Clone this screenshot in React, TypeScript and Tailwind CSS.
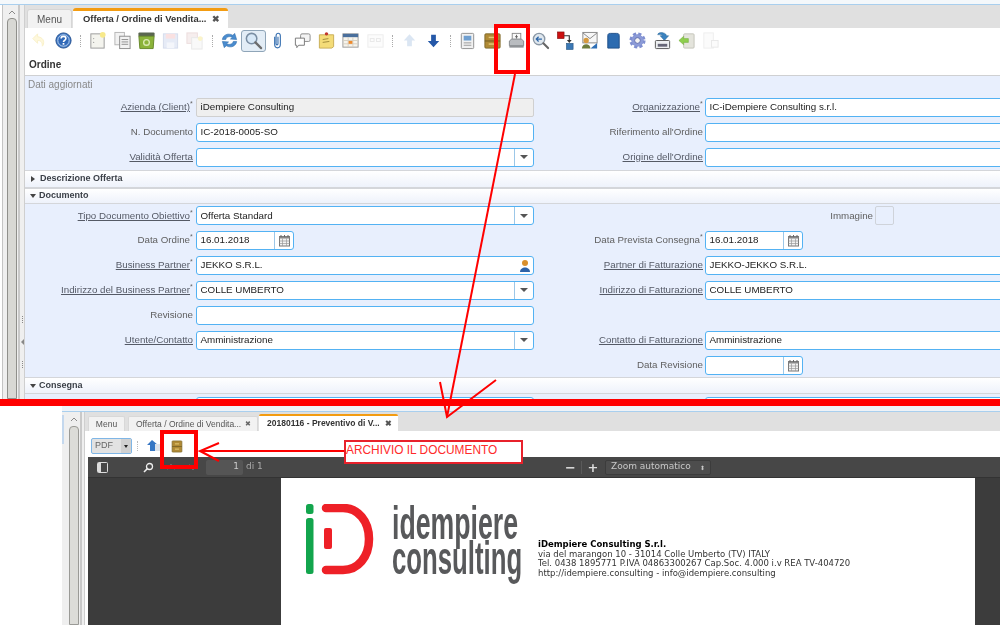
import type { ReactNode } from "react";

const Svg = ({ children, size = 19 }: { children: ReactNode; size?: number }) => (
  <svg width={size} height={size} viewBox="0 0 20 20">
    {children}
  </svg>
);

const toolbar: (string | null)[] = [
  "undo", "help", null,
  "new", "copy", "delete", "save", "savenew", null,
  "refresh", "find", "attach", "chat", "note", "calendar", "off", null,
  "up", "down", null,
  "report", "archive", "print", "zoom", "flow", "request", "product", "gear", "export", "import", "off2",
];

function ToolIcon({ name }: { name: string }) {
  switch (name) {
    case "undo":
      return (
        <Svg>
          <path d="M8 3 3 8l5 5V10c3 0 5 1 5 6 2-2 3-9-5-10z" fill="#fef8dc" stroke="#f9f0c8" strokeWidth="1" />
        </Svg>
      );
    case "help":
      return (
        <Svg>
          <circle cx="10" cy="10" r="8" fill="#3f78c4" stroke="#24508f" strokeWidth="1" />
          <circle cx="10" cy="10" r="6" fill="#2f68b8" stroke="#bcd3ef" strokeWidth="1" />
          <path d="M7.5 8c0-3.2 5-3.2 5 0 0 2-2.5 1.7-2.5 3.6" fill="none" stroke="#fff" strokeWidth="1.7" />
          <rect x="9.1" y="12.6" width="1.8" height="1.8" fill="#fff" />
        </Svg>
      );
    case "new":
      return (
        <Svg>
          <rect x="3" y="3" width="14" height="15" fill="#f4f4ee" stroke="#9a9a9a" />
          <circle cx="15.5" cy="4" r="3" fill="#f7e98a" />
          <circle cx="6" cy="8" r=".6" fill="#999" />
          <circle cx="6" cy="12" r=".6" fill="#999" />
        </Svg>
      );
    case "copy":
      return (
        <Svg>
          <rect x="2" y="1.5" width="10" height="13" fill="#f2f2f2" stroke="#b5b5b5" />
          <rect x="7" y="5.5" width="11" height="13" fill="#f2f2f2" stroke="#8d8d8d" />
          <path d="M9 9h7M9 11.5h7M9 14h7" stroke="#8d8d8d" />
        </Svg>
      );
    case "delete":
      return (
        <Svg>
          <rect x="1.500" y="1.500" width="17" height="4.500" rx="1" fill="#5a6650" />
          <path d="M2 5.500h16l-1 13H3z" fill="#8bb339" stroke="#66882a" />
          <circle cx="10" cy="12" r="3" fill="none" stroke="#dcebb4" strokeWidth="1.400" />
        </Svg>
      );
    case "save":
      return (
        <Svg>
          <rect x="2.5" y="3" width="15" height="15" fill="#e6ebf6" stroke="#d5dcec" />
          <rect x="5" y="3" width="10" height="5" fill="#fae1e1" />
          <rect x="6" y="12" width="8" height="6" fill="#f4f6fb" />
        </Svg>
      );
    case "savenew":
      return (
        <Svg>
          <rect x="2" y="2" width="11" height="11" fill="#f6eeee" stroke="#ecdcdc" />
          <rect x="7" y="7" width="11" height="12" fill="#f9f9f9" stroke="#e8e8e8" />
          <circle cx="16" cy="8" r="2.5" fill="#fbf4c9" />
        </Svg>
      );
    case "refresh":
      return (
        <Svg>
          <path d="M2.5 9C3 4.5 8 1.5 13.5 4.5L15.5 2.5 17.5 9 11 8.5l2-2C9.5 5 6.5 6.5 6 9z" fill="#4a8ccf" stroke="#2d6aa8" strokeWidth=".6" />
          <path d="M17.5 11c-.5 4.5-5.5 7.5-11 4.5L4.500 17.500 2.500 11l6.500.5-2 2c3.500 1.500 6.500 0 7-2.500z" fill="#4a8ccf" stroke="#2d6aa8" strokeWidth=".6" />
        </Svg>
      );
    case "find":
      return (
        <Svg>
          <circle cx="8" cy="8" r="5.500" fill="#d7e8f7" stroke="#7a8ea3" strokeWidth="1.600" />
          <path d="M12 12l6 6" stroke="#6d6d6d" strokeWidth="2.400" strokeLinecap="round" />
        </Svg>
      );
    case "attach":
      return (
        <Svg>
          <path d="M7 6v8c0 5 6 5 6 0V5c0-3.500-4.500-3.500-4.500 0v8.500c0 1.500 2 1.500 2 0V6" fill="none" stroke="#3a72b2" strokeWidth="1.200" />
        </Svg>
      );
    case "chat":
      return (
        <Svg>
          <rect x="8" y="3" width="10" height="8" rx="1.500" fill="#f4f4f4" stroke="#8a8a8a" />
          <path d="M2.500 7.500h9.500v7.500H6l-2 2.500V15H2.500z" fill="#fff" stroke="#777" />
        </Svg>
      );
    case "note":
      return (
        <Svg>
          <path d="M2.500 4h15v12.500l-2 1.500h-13z" fill="#f4dc78" stroke="#c8ad55" />
          <circle cx="10" cy="3" r="1.800" fill="#c2352b" />
          <path d="M6 9l6-1M6 12l7-1" stroke="#a08a3a" />
        </Svg>
      );
    case "calendar":
      return (
        <Svg>
          <rect x="2" y="3" width="16" height="14" fill="#f7f4ec" stroke="#9a9a9a" />
          <rect x="2" y="3" width="16" height="3.500" fill="#4a6f9c" />
          <path d="M2 10h16M2 13.500h16M7.500 6.500V17M12.500 6.500V17" stroke="#d6d0c2" />
          <rect x="8" y="10.500" width="4" height="3" fill="#ee8a2c" />
        </Svg>
      );
    case "off":
      return (
        <Svg>
          <rect x="2" y="4" width="16" height="13" fill="#fcfcfc" stroke="#ececec" />
          <rect x="4.500" y="8" width="4" height="3" fill="none" stroke="#e8e8e8" />
          <rect x="11" y="8" width="4" height="3" fill="none" stroke="#e8e8e8" />
        </Svg>
      );
    case "up":
      return (
        <Svg>
          <path d="M10 3.500 4 10h3.500v6h5v-6H16z" fill="#dbe6f3" />
        </Svg>
      );
    case "down":
      return (
        <Svg>
          <path d="M10 17l6-6.500h-3.500v-6.500h-5v6.500H4z" fill="#2558a8" />
        </Svg>
      );
    case "report":
      return (
        <Svg>
          <rect x="3.500" y="2.500" width="13" height="16" rx="1" fill="#f1f1f1" stroke="#8f8f8f" />
          <rect x="6" y="5" width="8" height="5" fill="#6f9fd0" />
          <path d="M6 12.500h8M6 15h8" stroke="#999" />
        </Svg>
      );
    case "archive":
      return (
        <Svg>
          <rect x="2" y="3" width="16" height="15" rx="1" fill="#b08a35" stroke="#7f6a2c" />
          <path d="M2 10.500h16" stroke="#6e5a22" />
          <rect x="6" y="6" width="8" height="1.500" fill="#e3c877" />
          <rect x="6" y="13" width="8" height="1.500" fill="#e3c877" />
        </Svg>
      );
    case "print":
      return (
        <Svg>
          <rect x="5.500" y="2.500" width="9" height="8" fill="#fafafa" stroke="#8c8c8c" />
          <path d="M10 4v4M8.500 6h3" stroke="#666" />
          <path d="M2.500 10.500 5 8.500h10l2.500 2v5h-15z" fill="#b9bcc0" stroke="#85888c" />
          <rect x="2.500" y="15" width="15" height="2.500" fill="#8f9296" />
        </Svg>
      );
    case "zoom":
      return (
        <Svg>
          <circle cx="8.500" cy="8.500" r="6" fill="#dfe7ee" stroke="#8a97a5" strokeWidth="1.400" />
          <path d="M11.500 8.500H5.500M8 6 5.500 8.500 8 11" fill="none" stroke="#2d66a8" strokeWidth="1.300" />
          <path d="M13 13l5 5" stroke="#666" strokeWidth="2.200" strokeLinecap="round" />
        </Svg>
      );
    case "flow":
      return (
        <Svg>
          <rect x="1.500" y="1" width="7" height="7" fill="#cc1111" stroke="#7c0b0b" strokeWidth=".6" />
          <path d="M8.500 5H14v5" fill="none" stroke="#333" strokeWidth="1.200" />
          <path d="M11.500 9.500h5L14 12.500z" fill="#333" />
          <rect x="11" y="13" width="7" height="6.500" fill="#3b78b5" stroke="#24527f" strokeWidth=".6" />
        </Svg>
      );
    case "request":
      return (
        <Svg>
          <rect x="3" y="1.500" width="15" height="11" fill="#f7f7f7" stroke="#888" />
          <path d="M3 2l7.500 6L18 2" fill="none" stroke="#888" />
          <circle cx="6.500" cy="10" r="2.800" fill="#d69a3e" />
          <path d="M2 18.500c0-6 9-6 9 0z" fill="#6e7d3d" />
          <path d="M11 18.500l7-6v6z" fill="#2f6fb5" />
        </Svg>
      );
    case "product":
      return (
        <Svg>
          <path d="M4 5c0-2 1-2.500 3-2.500h6c2 0 3 .5 3 2.500v13H4z" fill="#2c6bb0" stroke="#1f4f88" />
        </Svg>
      );
    case "gear":
      return (
        <Svg>
          <circle cx="10" cy="10" r="6.500" fill="#7f8fd0" stroke="#7f8fd0" strokeWidth="4" strokeDasharray="3 2.100" />
          <circle cx="10" cy="10" r="6" fill="#8c9bd8" />
          <circle cx="10" cy="10" r="3" fill="#f4f4f4" stroke="#5e6cab" />
        </Svg>
      );
    case "export":
      return (
        <Svg>
          <path d="M5 4c0-2 3-3 6-2 2 .5 3 1.500 3 3h2.500L12 10 7.500 5H10C9.500 4 7 3.500 5 4z" fill="#3a83c0" stroke="#24608f" strokeWidth=".5" />
          <rect x="2.500" y="10" width="15" height="8.500" rx="1" fill="#eef0f2" stroke="#555" />
          <rect x="5" y="13.500" width="10" height="3" fill="#667" />
        </Svg>
      );
    case "import":
      return (
        <Svg>
          <rect x="7" y="3" width="11" height="15" rx="1" fill="#e4e4dc" stroke="#c5c5bb" />
          <path d="M2 10l5-4.500v2.500h5v4H7v2.500z" fill="#8ecf4d" stroke="#6ea638" strokeWidth=".5" />
        </Svg>
      );
    default:
      return (
        <Svg>
          <rect x="3" y="2" width="10" height="16" fill="#fbfbfb" stroke="#eeeeee" />
          <rect x="11" y="10" width="7" height="7" fill="#fbfbfb" stroke="#e8e8e8" />
        </Svg>
      );
  }
}

function CalIcon() {
  return (
    <svg width="13" height="13" viewBox="0 0 13 13">
      <rect x="1.500" y="2.500" width="10" height="9.500" fill="#f2f2f2" stroke="#777" />
      <rect x="1.500" y="2.500" width="10" height="2" fill="#888" />
      <path d="M3 1v2M6.500 1v2M10 1v2" stroke="#666" />
      <path d="M1.500 7h10M1.500 9.500h10M4.500 4.500V12M8.500 4.500V12" stroke="#999" strokeWidth=".7" />
    </svg>
  );
}

function Label({ text, link, req }: { text: string; link?: boolean; req?: boolean }) {
  return (
    <span className={link ? "whitespace-nowrap text-[9.750px] text-[#555a66] underline" : "whitespace-nowrap text-[9.750px] text-[#5f5f5f]"}>
      {text}
      {req && <span className="relative -top-[4px] inline-block w-[3px] text-[7px] text-[#666] no-underline">*</span>}
    </span>
  );
}

function Field({ value, kind, grey }: { value?: string; kind?: "select" | "date" | "bp"; grey?: boolean }) {
  return (
    <div
      className={
        grey
          ? "flex h-[19px] w-full items-center rounded-[2px] border border-[#d0d0d0] bg-[#efefef]"
          : kind === "date"
            ? "flex h-[19px] w-[98px] items-center rounded-[3px] border border-[#53b2f3] bg-white"
            : "flex h-[19px] w-full items-center rounded-[3px] border border-[#53b2f3] bg-white"
      }
    >
      <span className="flex-1 truncate pl-[3.500px] text-[9.800px] text-[#222]">{value}</span>
      {kind === "select" && (
        <span className="flex h-full w-[19px] items-center justify-center border-l border-[#9cc7e8]">
          <span className="h-0 w-0 border-x-[4px] border-t-[4px] border-x-transparent border-t-[#555]" />
        </span>
      )}
      {kind === "date" && (
        <span className="flex h-full w-[19px] items-center justify-center border-l border-[#9cc7e8]">
          <CalIcon />
        </span>
      )}
      {kind === "bp" && (
        <svg className="mr-[1px]" width="14" height="14" viewBox="0 0 14 14">
          <circle cx="7" cy="4" r="3" fill="#d98f2b" />
          <path d="M2 13c0-6 10-6 10 0z" fill="#2d62a8" />
        </svg>
      )}
    </div>
  );
}

type Cell = { label: string; link?: boolean; req?: boolean; value?: string; kind?: "select" | "date" | "bp"; grey?: boolean };

function Row({ left, right }: { left?: Cell; right?: Cell }) {
  return (
    <div className="flex h-[24.850px] items-center">
      <div className="flex w-[168px] shrink-0 justify-end">{left && <Label text={left.label} link={left.link} req={left.req} />}</div>
      <div className="ml-[3px] w-[338px] shrink-0">{left && <Field value={left.value} kind={left.kind} grey={left.grey} />}</div>
      <div className="flex w-[169px] shrink-0 justify-end">{right && <Label text={right.label} link={right.link} req={right.req} />}</div>
      <div className="ml-[2px] w-[320px] shrink-0">{right && <Field value={right.value} kind={right.kind} />}</div>
    </div>
  );
}

function Section({ title, open, h }: { title: string; open?: boolean; h: string }) {
  return (
    <div className={`flex ${h} items-center gap-[3px] border-y border-[#d4d6da] bg-gradient-to-b from-white to-[#eef2fb] pl-[5px]`}>
      {open ? (
        <span className="h-0 w-0 border-x-[3.500px] border-t-[4px] border-x-transparent border-t-[#444]" />
      ) : (
        <span className="ml-[1px] mr-[2px] h-0 w-0 border-y-[3.500px] border-l-[4px] border-y-transparent border-l-[#444]" />
      )}
      <span className="text-[9px] font-bold text-[#3a3f47]">{title}</span>
    </div>
  );
}

function SideRail({ top }: { top: boolean }) {
  return (
    <div className="relative h-full w-full bg-[#efefef]">
      {top && <div className="absolute inset-y-0 left-0 w-[3px] border-r border-[#c4c4c4] bg-white" />}
      <div className={top ? "absolute bottom-0 left-[7px] top-[13px] w-[10px] rounded-t-[4px] border border-[#8f8f8b] bg-[#d8d8d4]" : "absolute bottom-0 left-[7px] top-[14px] w-[10px] rounded-t-[4px] border border-[#9a9a96] bg-[#dcdcd8]"} />
      <div className="absolute inset-y-0 left-[18px] w-[2px] bg-[#c9c9c9]" />
      <svg className="absolute left-[8px] top-[4px]" width="8" height="6" viewBox="0 0 8 6">
        <path d="M1 5l3-3 3 3" fill="none" stroke="#888" />
      </svg>
      {top && (
        <div className="absolute left-[20px] top-[311px] flex h-[52px] w-[4px] flex-col items-center justify-between">
          <span className="h-[7px] border-l border-dotted border-[#888]" />
          <span className="h-0 w-0 border-y-[3px] border-r-[3px] border-y-transparent border-r-[#888]" />
          <span className="h-[7px] border-l border-dotted border-[#888]" />
        </div>
      )}
    </div>
  );
}

function PdfLogo() {
  return (
    <svg className="shrink-0" width="72" height="74" viewBox="0 0 72 74">
      <rect x="1" y="0" width="7.500" height="10" rx="2.500" fill="#12a54d" />
      <rect x="1" y="14" width="7.500" height="56" rx="2.500" fill="#12a54d" />
      <path d="M21 4h17c15 0 26 13 26 31s-11 31-26 31H21" fill="none" stroke="#ee2027" strokeWidth="8.500" strokeLinecap="round" />
      <rect x="19" y="24" width="8" height="21" rx="2" fill="#ee2027" />
    </svg>
  );
}

export default function App() {
  return (
    <div className="relative h-[625px] w-[1000px] overflow-hidden bg-white font-['Liberation_Sans',Arial,sans-serif]">
      {/* first screenshot */}
      <div className="flex h-[399px] flex-col overflow-hidden blur-[0.3px]">
        <div className="h-[5px] shrink-0 border-b border-[#a9cfee] bg-[#f4f8fb]" />
        <div className="flex min-h-0 flex-1">
          <div className="w-[25px] shrink-0 border-r border-[#cfcfcf]">
            <SideRail top />
          </div>
          <div className="flex min-w-0 flex-1 flex-col bg-white">
            <div className="flex h-[23px] shrink-0 items-end gap-[1px] bg-[#e0e0e0] pl-[2px]">
              <div className="flex h-[19px] w-[45px] items-center justify-center rounded-t-[3px] border border-b-0 border-[#d6d6d6] bg-[#f2f2f2] text-[10px] text-[#555]">Menu</div>
              <div className="flex h-[20px] w-[155px] items-center justify-between rounded-t-[3px] border-t-[3px] border-[#f39c12] bg-white pl-[10px] pr-[8px] text-[9.400px] font-bold text-[#333]">
                <span className="whitespace-nowrap">Offerta / Ordine di Vendita...</span>
                <span className="text-[9px] text-[#555]">✖</span>
              </div>
            </div>
            <div className="flex h-[24px] shrink-0 items-center pl-[2px] pt-[1px]">
              {toolbar.map((t, i) =>
                t === null ? (
                  <span key={i} className="flex w-[10px] justify-center">
                    <span className="h-[12px] border-l border-dotted border-[#aaa]" />
                  </span>
                ) : (
                  <span
                    key={i}
                    className={
                      t === "find"
                        ? "flex h-[22px] w-[24.300px] items-center justify-center rounded-[3px] border border-[#8fa5b8] bg-[#e3edf6]"
                        : "flex h-[22px] w-[24.300px] items-center justify-center"
                    }
                  >
                    <ToolIcon name={t} />
                  </span>
                ),
              )}
            </div>
            <div className="flex h-[24px] shrink-0 items-center border-b border-[#cfd0d2] pl-[4px] pt-[1px] text-[10px] font-bold text-[#333]">Ordine</div>
            <div className="min-h-0 flex-1 bg-[#e8effd]">
              <div className="flex h-[19px] items-center pb-[3px] pl-[3px] text-[10px] text-[#888]">Dati aggiornati</div>
              <Row
                left={{ label: "Azienda (Client)", link: true, req: true, value: "iDempiere Consulting", grey: true }}
                right={{ label: "Organizzazione", link: true, req: true, value: "IC-iDempiere Consulting s.r.l." }}
              />
              <Row left={{ label: "N. Documento", value: "IC-2018-0005-SO" }} right={{ label: "Riferimento all'Ordine" }} />
              <Row left={{ label: "Validità Offerta", link: true, kind: "select" }} right={{ label: "Origine dell'Ordine", link: true }} />
              <Section title="Descrizione Offerta" h="h-[18px]" />
              <Section title="Documento" open h="h-[16px]" />
              <div className="flex h-[24.850px] items-center">
                <div className="flex w-[168px] shrink-0 justify-end">
                  <Label text="Tipo Documento Obiettivo" link req />
                </div>
                <div className="ml-[3px] w-[338px] shrink-0">
                  <Field value="Offerta Standard" kind="select" />
                </div>
                <div className="flex w-[339px] shrink-0 justify-end">
                  <Label text="Immagine" />
                </div>
                <div className="ml-[2px] h-[19px] w-[19px] shrink-0 rounded-[2px] border border-[#cfd3da] bg-[#e8effd]" />
              </div>
              <Row
                left={{ label: "Data Ordine", req: true, value: "16.01.2018", kind: "date" }}
                right={{ label: "Data Prevista Consegna", req: true, value: "16.01.2018", kind: "date" }}
              />
              <Row
                left={{ label: "Business Partner", link: true, req: true, value: "JEKKO S.R.L.", kind: "bp" }}
                right={{ label: "Partner di Fatturazione", link: true, value: "JEKKO-JEKKO S.R.L." }}
              />
              <Row
                left={{ label: "Indirizzo del Business Partner", link: true, req: true, value: "COLLE UMBERTO", kind: "select" }}
                right={{ label: "Indirizzo di Fatturazione", link: true, value: "COLLE UMBERTO" }}
              />
              <Row left={{ label: "Revisione" }} />
              <Row
                left={{ label: "Utente/Contatto", link: true, value: "Amministrazione", kind: "select" }}
                right={{ label: "Contatto di Fatturazione", link: true, value: "Amministrazione" }}
              />
              <Row right={{ label: "Data Revisione", kind: "date" }} />
              <Section title="Consegna" open h="h-[17px]" />
              <div className="ml-[171px] mt-[3px] flex gap-[171px]">
                <div className="h-[19px] w-[338px] shrink-0 rounded-[3px] border border-[#53b2f3] bg-white" />
                <div className="h-[19px] w-[320px] shrink-0 rounded-[3px] border border-[#53b2f3] bg-white" />
              </div>
            </div>
          </div>
        </div>
      </div>

      <div className="h-[7px] bg-[#ff0000]" />

      {/* second screenshot */}
      <div className="flex h-[219px] blur-[0.3px]">
        <div className="w-[62px] shrink-0 bg-white" />
        <div className="flex min-w-0 flex-1 flex-col">
          <div className="h-[6px] shrink-0 border-b border-[#a9cfee] bg-[#eef3f8]" />
          <div className="flex min-h-0 flex-1">
            <div className="relative w-[23px] shrink-0 border-r border-[#cfcfcf]">
              <SideRail top={false} />
              <div className="absolute left-0 top-[3px] h-[29px] w-[2px] bg-[#c4d8ee]" />
            </div>
            <div className="flex min-w-0 flex-1 flex-col">
              <div className="flex h-[19px] shrink-0 items-end gap-[3px] bg-[#e0e0e0] pl-[3px]">
                <div className="flex h-[15px] w-[37px] items-center justify-center rounded-t-[2px] border border-b-0 border-[#d8d8d8] bg-[#f2f2f2] text-[8.500px] text-[#555]">Menu</div>
                <div className="-mr-[2px] flex h-[15px] w-[130px] items-center justify-between rounded-t-[2px] border border-b-0 border-[#d8d8d8] bg-[#f2f2f2] pl-[7px] pr-[6px] text-[8.500px] text-[#555]">
                  <span>Offerta / Ordine di Vendita...</span>
                  <span className="text-[7px] text-[#666]">✖</span>
                </div>
                <div className="flex h-[17px] w-[139px] items-center justify-between rounded-t-[2px] border-t-2 border-[#f39c12] bg-white pl-[8px] pr-[6px] text-[8.500px] font-bold text-[#333]">
                  <span>20180116 - Preventivo di V...</span>
                  <span className="text-[8px] text-[#555]">✖</span>
                </div>
              </div>
              <div className="flex h-[26px] shrink-0 items-center bg-white pl-[6px] pt-[4px]">
                <div className="flex h-[16px] w-[41px] items-center justify-between rounded-[2px] border border-[#7fb6e6] bg-[#e2e2e2] pl-[3px] text-[9px] text-[#666]">
                  PDF
                  <span className="flex h-full w-[10px] items-center justify-center bg-[#d0d0d0]">
                    <span className="h-0 w-0 border-x-[2.500px] border-t-[3px] border-x-transparent border-t-[#222]" />
                  </span>
                </div>
                <span className="ml-[5px] h-[10px] border-l border-dotted border-[#bbb]" />
                <span className="ml-[8px] flex w-[16px]">
                  <svg width="16" height="14" viewBox="0 0 16 14">
                    <path d="M6 1 1 6h3v6h5V6h3z" fill="#3576c4" />
                    <rect x="9" y="5" width="7" height="7" fill="#dde3ea" />
                  </svg>
                </span>
                <span className="ml-[8px] flex">
                  <svg width="14" height="15" viewBox="0 0 20 20">
                    <rect x="3" y="2" width="14" height="16" rx="1" fill="#b08a35" stroke="#7f6a2c" />
                    <path d="M3 10h14" stroke="#6e5a22" />
                    <rect x="7" y="5.500" width="6" height="1.500" fill="#e3c877" />
                    <rect x="7" y="13" width="6" height="1.500" fill="#e3c877" />
                  </svg>
                </span>
              </div>
              <div className="min-h-0 flex-1 bg-white pl-[3px]">
                <div className="flex h-[21px] shrink-0 items-center border-b border-[#333] bg-[#474747] pl-[9px] font-['DejaVu_Sans',sans-serif] text-[9px] text-[#bdbdbd]">
                  <svg width="11" height="11" viewBox="0 0 11 11">
                    <rect x=".5" y=".5" width="10" height="10" rx="1" fill="none" stroke="#ddd" />
                    <rect x="1" y="1" width="3" height="9" fill="#ddd" />
                  </svg>
                  <svg className="ml-[35px]" width="11" height="11" viewBox="0 0 11 11">
                    <circle cx="6.500" cy="4.500" r="3" fill="none" stroke="#eee" strokeWidth="1.300" />
                    <path d="M4.500 6.500 1 10" stroke="#eee" strokeWidth="1.600" />
                  </svg>
                  <svg className="ml-[12px]" width="10" height="8" viewBox="0 0 10 8">
                    <path d="M1 6l4-4 4 4" fill="none" stroke="#8a8a8a" strokeWidth="1.500" />
                  </svg>
                  <svg className="ml-[12px]" width="10" height="8" viewBox="0 0 10 8">
                    <path d="M1 2l4 4 4-4" fill="none" stroke="#8a8a8a" strokeWidth="1.500" />
                  </svg>
                  <div className="ml-[8px] flex h-[15px] w-[37px] items-center justify-end rounded-[2px] bg-[#555] pr-[4px] text-[#ccc]">1</div>
                  <span className="ml-[3px] w-[314px] shrink-0 text-[#aaa]">di 1</span>
                  <span className="flex w-[22px] justify-center border-r border-[#5a5a5a] text-[13px] font-bold leading-none text-[#ddd]">−</span>
                  <span className="flex w-[22px] justify-center text-[13px] font-bold leading-none text-[#ddd]">+</span>
                  <div className="ml-[1px] flex h-[15px] w-[106px] items-center justify-between rounded-[2px] border border-[#3c3c3c] bg-[#4d4d4d] pl-[5px] pr-[5px] text-[#c8c8c8]">
                    Zoom automatico
                    <span className="text-[6px]">⬍</span>
                  </div>
                </div>
                <div className="h-[148px] bg-[#3c3c3c] pl-[193px]">
                  <div className="flex h-full w-[694px] items-start bg-white pl-[24px] pt-[26px]">
                    <PdfLogo />
                    <div className="ml-[15px] flex h-[84px] w-[130px] shrink-0 flex-col text-[#58595b]">
                      <span className="mt-[2px] h-[35px] origin-left scale-x-[.58] whitespace-nowrap text-[46px] font-bold leading-[35px]">idempiere</span>
                      <span className="h-[35px] origin-left scale-x-[.56] whitespace-nowrap text-[46px] font-bold leading-[35px]">consulting</span>
                    </div>
                    <div className="ml-[16px] mt-[36px] whitespace-nowrap font-['DejaVu_Sans',sans-serif] text-[8.500px] leading-[9.500px] text-[#333]">
                      <div className="font-bold text-black">iDempiere Consulting S.r.l.</div>
                      <div>via del marangon 10 - 31014 Colle Umberto (TV) ITALY</div>
                      <div>Tel. 0438 1895771 P.IVA 04863300267 Cap.Soc. 4.000 i.v REA TV-404720</div>
                      <div>http://idempiere.consulting - info@idempiere.consulting</div>
                    </div>
                  </div>
                </div>
              </div>
            </div>
          </div>
        </div>
      </div>

      {/* annotations drawn over the screenshots */}
      <div className="absolute left-[494px] top-[24px] h-[50px] w-[36px] border-[4px] border-[#ff0000]" />
      <div className="absolute left-[160px] top-[430px] h-[39px] w-[38px] border-[4px] border-[#ff0000]" />
      <div className="absolute left-[344px] top-[440px] flex h-[24px] w-[179px] items-center border-2 border-[#e8212b] bg-white pb-[3px] text-[11.900px] text-[#ff2a2a]">ARCHIVIO IL DOCUMENTO</div>
      <svg className="absolute left-0 top-0" width="1000" height="625" viewBox="0 0 1000 625">
        <path d="M515 74 447 417" fill="none" stroke="#ff0000" strokeWidth="2" />
        <path d="M440 382 447 417 496 380" fill="none" stroke="#ff0000" strokeWidth="2" />
        <path d="M344 451H200M219 443l-19 8 19 10" fill="none" stroke="#ff0000" strokeWidth="2" />
      </svg>
    </div>
  );
}
